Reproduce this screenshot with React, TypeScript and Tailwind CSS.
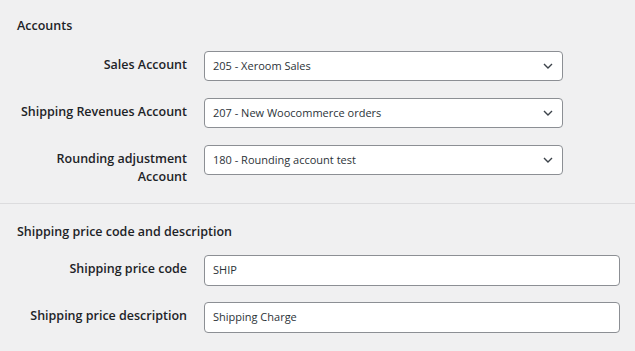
import React from "react";

const font = { fontFamily: '"Open Sans", "Lato", sans-serif' };

function Chevron() {
  return (
    <svg width="10" height="6" viewBox="0 0 10 6" className="text-[#3c434a]">
      <path d="M1 1l4 4 4-4" fill="none" stroke="currentColor" strokeWidth="1.4" />
    </svg>
  );
}

function SelectBox({ value }: { value: string }) {
  return (
    <div className="flex h-[30px] w-[359px] items-center justify-between rounded-[4px] border border-[#8c8f94] bg-white pl-[8px] pr-[9px] text-[11px] text-[#2c3338]">
      <span>{value}</span>
      <Chevron />
    </div>
  );
}

function TextBox({ value }: { value: string }) {
  return (
    <div className="flex h-[31px] w-[416px] items-center rounded-[4px] border border-[#8c8f94] bg-white pl-[8px] text-[11px] text-[#2c3338]">
      {value}
    </div>
  );
}

function Row({ label, children }: { label: React.ReactNode; children: React.ReactNode }) {
  return (
    <div className="flex items-start">
      <div className="w-[187px] pt-[5px] text-right text-[12.5px] font-semibold leading-[18px] text-[#1d2327]">
        {label}
      </div>
      <div className="ml-[17px]">{children}</div>
    </div>
  );
}

export default function App() {
  return (
    <div style={font} className="h-[351px] w-[635px] overflow-hidden bg-[#f0f0f1]">
      <div className="px-[17px] pt-[17px]">
        <h2 className="text-[12.5px] font-semibold leading-[18px] text-[#1d2327]">Accounts</h2>
      </div>
      <div className="mt-[16px] flex flex-col gap-[17px]">
        <Row label="Sales Account">
          <SelectBox value="205 - Xeroom Sales" />
        </Row>
        <Row label="Shipping Revenues Account">
          <SelectBox value="207 - New Woocommerce orders" />
        </Row>
        <Row
          label={
            <>
              Rounding adjustment
              <br />
              Account
            </>
          }
        >
          <SelectBox value="180 - Rounding account test" />
        </Row>
      </div>
      <div className="mt-[17px] h-px bg-[#dcdcde]" />
      <div className="px-[17px] pt-[19px]">
        <h2 className="text-[12.5px] font-semibold leading-[18px] text-[#1d2327]">
          Shipping price code and description
        </h2>
      </div>
      <div className="mt-[14px] flex flex-col gap-[16px]">
        <Row label="Shipping price code">
          <TextBox value="SHIP" />
        </Row>
        <Row label="Shipping price description">
          <TextBox value="Shipping Charge" />
        </Row>
      </div>
    </div>
  );
}
